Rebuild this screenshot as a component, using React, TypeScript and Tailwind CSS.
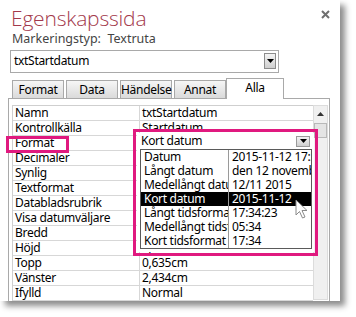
import React from "react";

const rows: [string, string][] = [
  ["Namn", "txtStartdatum"],
  ["Kontrollkälla", "Startdatum"],
  ["Format", "Kort datum"],
  ["Decimaler", ""],
  ["Synlig", ""],
  ["Textformat", ""],
  ["Databladsrubrik", ""],
  ["Visa datumväljare", ""],
  ["Bredd", ""],
  ["Höjd", "0,556cm"],
  ["Topp", "0,635cm"],
  ["Vänster", "2,434cm"],
  ["Ifylld", "Normal"],
];

const items: [string, string][] = [
  ["Datum", "2015-11-12 17:34:23"],
  ["Långt datum", "den 12 november 2015"],
  ["Medellångt datum", "12/11 2015"],
  ["Kort datum", "2015-11-12"],
  ["Långt tidsformat", "17:34:23"],
  ["Medellångt tidsformat", "05:34"],
  ["Kort tidsformat", "17:34"],
];

function Tri() {
  return (
    <svg width="7" height="4" viewBox="0 0 7 4">
      <path d="M0 0 L7 0 L3.5 4 Z" fill="#000" />
    </svg>
  );
}

export default function App() {
  const font = { fontFamily: '"Noto Sans", "Open Sans", sans-serif' };
  return (
    <div className="w-[356px] h-[317px] bg-white overflow-hidden tracking-[-0.3px]" style={font}>
      <div className="relative w-[340px] h-[301px] bg-white shadow-[5px_5px_6px_rgba(0,0,0,0.45)] flex flex-col">
        <div className="flex justify-between items-start">
          <div className="pl-[11px] pt-[3px] h-[31px] text-[21px] leading-[30px] font-light tracking-[-0.2px] text-[#a3394b]" style={{ fontFamily: '"Open Sans", "Noto Sans", sans-serif' }}>
            Egenskapssida
          </div>
          <div className="pr-[10px] pt-[10px]">
            <svg width="9" height="9" viewBox="0 0 9 9">
              <path d="M1 1 L8 8 M8 1 L1 8" stroke="#6f6f6f" strokeWidth="2" />
            </svg>
          </div>
        </div>
        <div className="pl-[12px] h-[15px] text-[12.5px] leading-[15px] tracking-normal text-[#444]">
          Markeringstyp:&nbsp; Textruta
        </div>
        <div className="ml-[10px] mt-[4px] w-[269px] h-[23px] border border-[#a9a9a9] flex items-center justify-between pl-[3px] pr-[2px]">
          <span className="text-[12px] text-black">txtStartdatum</span>
          <div className="w-[12px] h-[16px] border border-[#8c8c8c] bg-gradient-to-b from-[#f4f4f4] to-[#cfcfcf] flex items-center justify-center">
            <Tri />
          </div>
        </div>
        <div className="ml-[12px] mt-[5px] flex items-end gap-[2px] h-[21px] relative z-10">
          {["Format", "Data", "Händelse", "Annat"].map((t) => (
            <div key={t} className="w-[52px] h-[18px] border border-b-0 border-[#a9a9a9] bg-gradient-to-b from-[#f6f6f6] to-[#dadada] text-[12px] leading-[17px] text-center text-black">
              {t}
            </div>
          ))}
          <div className="-ml-[2px] w-[58px] h-[21px] border border-b-0 border-[#a9a9a9] bg-white text-[12px] leading-[17px] text-center text-black -mb-px">
            Alla
          </div>
        </div>
        <div className="ml-[8px] w-[322px] flex-1 border border-[#a9a9a9] border-b-0 pt-[6px] pl-[3px] pr-[1px] flex">
          <div className="w-[302px] border-l border-t border-[#cfcfcf]">
            {rows.map(([a, b], i) => (
              <div key={i} className="flex h-[15px] border-b border-[#d7d7d7] text-[12px] leading-[14px] text-black">
                <div className="w-[127px] border-r border-[#d7d7d7] pl-[2px] whitespace-nowrap overflow-hidden">{a}</div>
                <div className="flex-1 pl-[2px] whitespace-nowrap overflow-hidden">{b}</div>
              </div>
            ))}
          </div>
          <div className="w-[15px] h-[195px] bg-[#f0f0f0] border border-[#dcdcdc] flex flex-col items-center">
            <div className="h-[15px] flex items-center justify-center">
              <svg width="7" height="4" viewBox="0 0 7 4">
                <path d="M0 4 L7 4 L3.5 0 Z" fill="#333" />
              </svg>
            </div>
            <div className="mt-[2px] w-[13px] h-[15px] bg-[#e4e4e4] border border-[#b8b8b8]" />
          </div>
        </div>

        {/* dropdown overlay */}
        <div className="absolute left-[137px] top-[133px] w-[177px] h-[119px] bg-white">
          <div className="flex items-center justify-between h-[16px] pl-[4px] pr-[4px] text-[12px] text-black">
            <span>Kort datum</span>
            <div className="w-[14px] h-[11px] bg-gradient-to-b from-[#f2f2f2] to-[#cfcfcf] border border-[#9a9a9a] flex items-center justify-center">
              <Tri />
            </div>
          </div>
          <div className="ml-[3px] w-[172px] h-[100px] border border-[#5a5a5a] bg-white overflow-hidden">
            {items.map(([a, b], i) => (
              <div key={i} className={"flex h-[14px] text-[12px] leading-[14px] " + (i === 3 ? "bg-black text-white" : "text-black")}>
                <div className="w-[88px] border-r border-[#9a9a9a] pl-[3px] whitespace-nowrap overflow-hidden">{a}</div>
                <div className="flex-1 pl-[3px] whitespace-nowrap overflow-hidden">{b}</div>
              </div>
            ))}
          </div>
        </div>
        <div className="absolute left-[133px] top-[129px] w-[185px] h-[127px] border-[3px] border-[#e0197f]" />
        <div className="absolute left-[6px] top-[136px] w-[63px] h-[17px] border-[3px] border-[#e0197f]" />
        <svg className="absolute left-[295px] top-[199px]" width="16" height="21" viewBox="0 0 16 21">
          <path d="M1 1 L1 16 L4.5 12.5 L7.5 19 L10 18 L7 11.5 L12 11.5 Z" fill="#fff" stroke="#8a8a8a" strokeWidth="1" strokeLinejoin="round" />
        </svg>
      </div>
    </div>
  );
}
